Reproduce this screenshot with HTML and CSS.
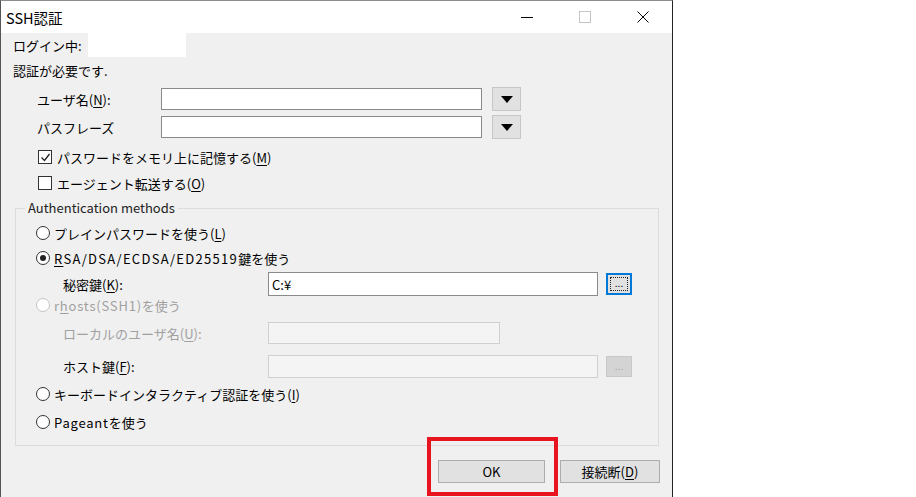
FILE: index.html
```html
<!DOCTYPE html>
<html lang="ja">
<head>
    <meta charset="UTF-8">
    <title>SSH認証</title>
    <link rel="stylesheet" href="styles.css">
</head>
<body>
    <div class="window">
        <div class="titlebar">
            <span class="title">SSH認証</span>
            <div class="caption-buttons">
                <span class="cap"><svg width="12" height="12" viewBox="0 0 12 12"><path d="M0 6.5h12" stroke="#000" stroke-width="1"/></svg></span>
                <span class="cap"><svg width="12" height="12" viewBox="0 0 12 12"><rect x="0.5" y="0.5" width="11" height="11" fill="none" stroke="#c4c4c4"/></svg></span>
                <span class="cap"><svg width="12" height="12" viewBox="0 0 12 12"><path d="M0.5 0.5l11 11M11.5 0.5l-11 11" stroke="#000" stroke-width="1"/></svg></span>
            </div>
        </div>

        <div class="client">
            <div class="login-row">
                <span class="login-label">ログイン中:</span>
                <span class="login-host"></span>
            </div>
            <div class="msg-row">認証が必要です.</div>

            <div class="field-row user-row">
                <span class="field-label">ユーザ名(<u>N</u>):</span>
                <span class="edit wide"></span>
                <span class="drop-btn"><svg width="12" height="7" viewBox="0 0 12 7"><path d="M0 0h12L6 7z" fill="#000"/></svg></span>
            </div>
            <div class="field-row pass-row">
                <span class="field-label">パスフレーズ</span>
                <span class="edit wide"></span>
                <span class="drop-btn"><svg width="12" height="7" viewBox="0 0 12 7"><path d="M0 0h12L6 7z" fill="#000"/></svg></span>
            </div>

            <div class="check-row first">
                <span class="checkbox"><svg width="11" height="11" viewBox="0 0 11 11"><path d="M1.5 5.5l3 3 5-6.5" fill="none" stroke="#222" stroke-width="1.3"/></svg></span>
                <span>パスワードをメモリ上に記憶する(<u>M</u>)</span>
            </div>
            <div class="check-row second">
                <span class="checkbox"></span>
                <span>エージェント転送する(<u>O</u>)</span>
            </div>

            <fieldset class="group">
                <legend>Authentication methods</legend>
                <div class="group-body">
                    <div class="radio-row r-plain">
                        <span class="radio"></span>
                        <span>プレインパスワードを使う(<u>L</u>)</span>
                    </div>
                    <div class="radio-row r-rsa">
                        <span class="radio checked"></span>
                        <span><span class="latin key-types"><u>R</u>SA/DSA/ECDSA/ED25519</span>鍵を使う</span>
                    </div>
                    <div class="sub-row key-row">
                        <span class="sub-label">秘密鍵(<u>K</u>):</span>
                        <span class="edit key-edit">C:¥</span>
                        <span class="browse focused"><span class="focus-rect">...</span></span>
                    </div>
                    <div class="radio-row r-rhosts disabled">
                        <span class="radio"></span>
                        <span><span class="latin">r<u>h</u>osts(SSH1)</span>を使う</span>
                    </div>
                    <div class="sub-row local-row">
                        <span class="sub-label disabled">ローカルのユーザ名(<u>U</u>):</span>
                        <span class="edit off local-edit"></span>
                    </div>
                    <div class="sub-row host-row">
                        <span class="sub-label">ホスト鍵(<u>F</u>):</span>
                        <span class="edit off host-edit"></span>
                        <span class="browse off">...</span>
                    </div>
                    <div class="radio-row r-kbd">
                        <span class="radio"></span>
                        <span>キーボードインタラクティブ認証を使う(<u>I</u>)</span>
                    </div>
                    <div class="radio-row r-pageant">
                        <span class="radio"></span>
                        <span><span class="latin">Pageant</span>を使う</span>
                    </div>
                </div>
            </fieldset>

            <div class="button-row">
                <span class="push ok">OK</span>
                <span class="push disconnect">接続断(<u>D</u>)</span>
            </div>
        </div>

        <div class="highlight"></div>
    </div>
</body>
</html>
```

FILE: styles.css
```css
body {
    margin: 0;
    background: #fff;
    font-family: "Noto Sans CJK JP", "Noto Sans", sans-serif;
    font-size: 13px;
    color: #000;
}
u {
    text-decoration-thickness: 1px;
    text-underline-offset: 2px;
}
.latin {
    letter-spacing: 0.8px;
}
.latin.key-types {
    letter-spacing: 1.3px;
}
.window {
    position: relative;
    box-sizing: border-box;
    width: 673px;
    height: 497px;
    border-top: 1px solid #8c8c8c;
    border-left: 1px solid #555;
    border-right: 1px solid #222;
    background: #f0f0f0;
}
.titlebar {
    display: flex;
    align-items: center;
    justify-content: space-between;
    height: 32px;
    background: #fff;
}
.title {
    padding-left: 5px;
    font-size: 14.5px;
}
.caption-buttons {
    display: flex;
}
.cap {
    display: flex;
    align-items: center;
    justify-content: center;
    width: 58px;
    height: 32px;
}
.client {
    display: flex;
    flex-direction: column;
}
.login-row {
    display: flex;
    align-items: center;
    height: 24px;
    padding-left: 12px;
}
.login-label {
    width: 75px;
}
.login-host {
    width: 98px;
    height: 24px;
    background: #fff;
}
.msg-row {
    display: flex;
    align-items: center;
    height: 24px;
    margin-top: 1px;
    padding-left: 12px;
}
.field-row {
    display: flex;
    align-items: center;
    height: 24px;
    padding-left: 36px;
}
.user-row {
    margin-top: 5px;
}
.pass-row {
    margin-top: 4px;
}
.field-label {
    width: 124px;
}
.edit {
    box-sizing: border-box;
    display: flex;
    align-items: center;
    height: 22px;
    padding-left: 3px;
    background: #fff;
    border: 1px solid #8a8a8a;
}
.edit.wide {
    width: 321px;
}
.edit.off {
    background: #f4f4f4;
    border-color: #d0d0d0;
}
.drop-btn {
    box-sizing: border-box;
    display: flex;
    align-items: center;
    justify-content: center;
    width: 29px;
    height: 24px;
    margin-left: 10px;
    background: #e1e1e1;
    border: 1px solid #c6c6c6;
}
.check-row {
    display: flex;
    align-items: center;
    height: 20px;
    padding-left: 37px;
}
.check-row.first {
    margin-top: 8px;
}
.check-row.second {
    margin-top: 6px;
}
.checkbox {
    box-sizing: border-box;
    display: flex;
    align-items: center;
    justify-content: center;
    width: 14px;
    height: 14px;
    margin-right: 5px;
    background: #fff;
    border: 1px solid #333;
}
.group {
    box-sizing: border-box;
    width: 644px;
    margin: 6px 0 0 14px;
    padding: 0;
    border: 1px solid #dcdcdc;
}
.group legend {
    margin-left: 9px;
    padding: 0 3px;
    line-height: 18px;
    color: #222;
}
.group-body {
    padding: 4px 0 11px 20px;
}
.radio-row {
    display: flex;
    align-items: center;
    height: 24px;
}
.r-rsa {
    margin-top: 1px;
}
.r-rhosts {
    height: 18px;
}
.r-kbd,
.r-pageant {
    margin-top: 4px;
}
.radio {
    box-sizing: border-box;
    display: flex;
    align-items: center;
    justify-content: center;
    width: 14px;
    height: 14px;
    margin-right: 4px;
    background: #fff;
    border: 1px solid #333;
    border-radius: 50%;
}
.radio.checked::after {
    content: "";
    width: 6px;
    height: 6px;
    border-radius: 50%;
    background: #222;
}
.disabled {
    color: #a0a0a0;
}
.disabled .radio {
    border-color: #c4c4c4;
}
.sub-row {
    display: flex;
    align-items: center;
    height: 24px;
    padding-left: 27px;
}
.key-row {
    margin-top: 2px;
}
.local-row {
    margin-top: 7px;
}
.host-row {
    margin-top: 9px;
}
.sub-label {
    width: 205px;
}
.key-edit {
    width: 330px;
    height: 24px;
}
.local-edit {
    width: 232px;
}
.host-edit {
    width: 330px;
    height: 23px;
}
.browse {
    box-sizing: border-box;
    display: flex;
    align-items: center;
    justify-content: center;
    width: 26px;
    height: 22px;
    margin-left: 8px;
    font-size: 10px;
    line-height: 1;
    background: #e1e1e1;
}
.browse.focused {
    border: 2px solid #0078d7;
}
.focus-rect {
    display: flex;
    align-items: flex-end;
    justify-content: center;
    box-sizing: border-box;
    width: 18px;
    height: 14px;
    padding-bottom: 2px;
    border: 1px dotted #222;
}
.browse.off {
    height: 21px;
    color: #a8a8a8;
    background: #d4d4d4;
    border: 1px solid #c8c8c8;
}
.button-row {
    display: flex;
    justify-content: flex-end;
    gap: 15px;
    margin-top: 14px;
    padding-right: 12px;
}
.push {
    box-sizing: border-box;
    display: flex;
    align-items: center;
    justify-content: center;
    height: 23px;
    background: #e1e1e1;
    border: 1px solid #adadad;
}
.ok {
    width: 107px;
}
.disconnect {
    width: 100px;
}
.highlight {
    position: absolute;
    left: 426px;
    top: 436px;
    width: 123px;
    height: 51px;
    border: 4px solid #e8141f;
}
```
